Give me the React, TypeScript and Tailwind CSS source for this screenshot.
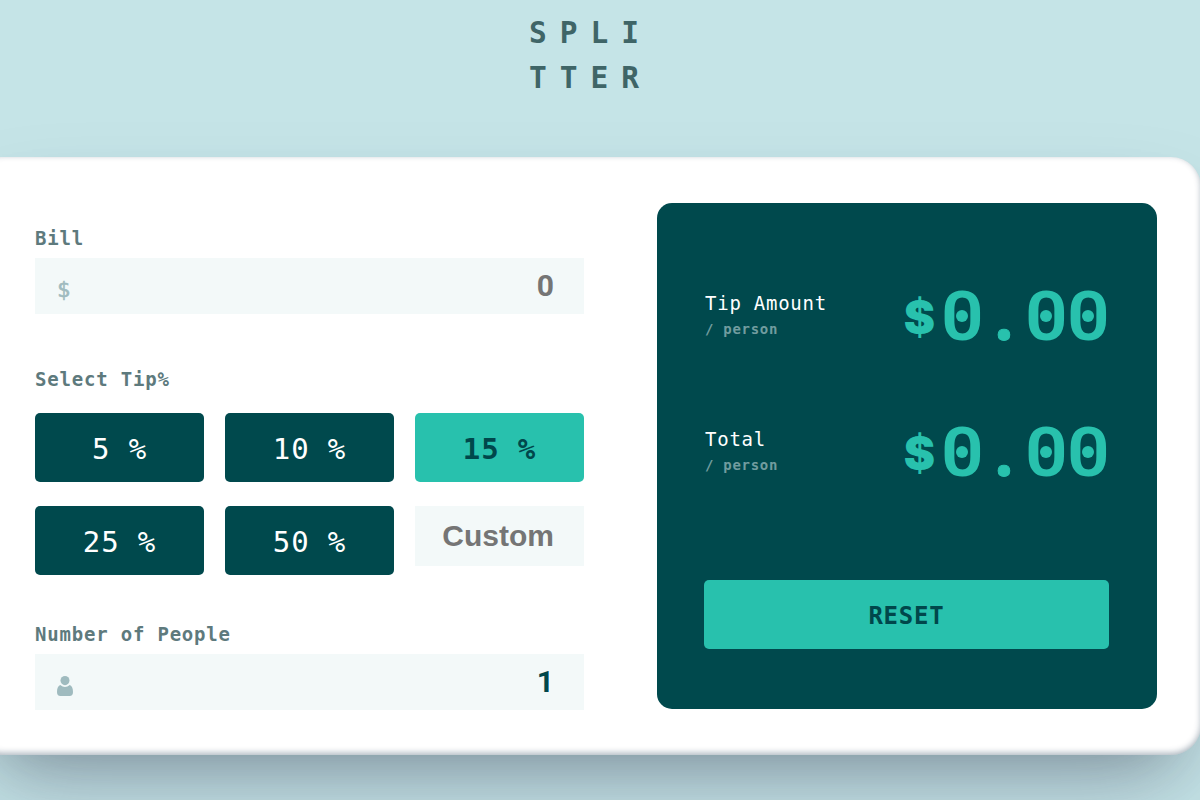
import React, { useState } from "react";

const mono = "font-['DejaVu_Sans_Mono',monospace]";
const sans = "font-['Liberation_Sans',sans-serif]";

function Label({ children }: { children: React.ReactNode }) {
  return (
    <div className="h-[30px] whitespace-pre text-[19px] leading-[30px] font-bold tracking-[0.8px] text-[#5e7a7d]">
      {children}
    </div>
  );
}

function PersonIcon() {
  return (
    <svg className="mt-2 h-5 w-4" viewBox="0 0 16 20" fill="#9fbbbf">
      <ellipse cx="8" cy="4.6" rx="4.5" ry="4.6" />
      <path d="M3.2 9 Q8 12.8 12.8 9 C15 9.9 16 12.2 16 16 Q16 20 12.6 20 H3.4 Q0 20 0 16 C0 12.2 1 9.9 3.2 9 Z" />
    </svg>
  );
}

function Field({
  icon,
  value,
  placeholder,
}: {
  icon: React.ReactNode;
  value: string;
  placeholder?: string;
}) {
  const [text, setText] = useState(value);
  return (
    <div className="flex h-14 w-[549px] items-center bg-[#f3f9f9] pr-[30px] pl-[22px]">
      {icon}
      <input
        className="h-full min-w-0 flex-1 bg-transparent pb-px text-right font-['Roboto',sans-serif] text-[30px] font-bold text-[#00474b] outline-none placeholder:text-[#757575]"
        value={text}
        placeholder={placeholder}
        onChange={(e) => setText(e.target.value)}
      />
    </div>
  );
}

function TipButton({
  value,
  active,
  onClick,
}: {
  value: number;
  active: boolean;
  onClick: () => void;
}) {
  const tone = active
    ? "bg-[#28c1ad] text-[#00474b] font-bold"
    : "bg-[#00494d] text-white";
  return (
    <button
      onClick={onClick}
      className={`h-[69px] w-[169px] rounded-[5px] pt-[5px] text-[29px] tracking-[0.9px] ${tone}`}
    >
      {value} %
    </button>
  );
}

function Zero() {
  return (
    <span className="relative flex w-[42px] justify-center pt-px">
      <span className="inline-block scale-x-110 font-semibold">0</span>
      <span className="absolute top-[41px] left-[15px] h-3 w-3 rounded-full bg-[#28c1ad]" />
    </span>
  );
}

function Result({ title }: { title: string }) {
  return (
    <div className="flex h-[136px] justify-between">
      <div className="pt-[19px] pl-px">
        <div className="text-[19px] leading-[30px] tracking-[0.75px] text-white">{title}</div>
        <div className="text-[14px] leading-[22px] font-bold tracking-[0.7px] text-[#719c9f]">
          / person
        </div>
      </div>
      <div className="flex h-[102px] pr-px font-['Roboto',sans-serif] text-[68px] leading-[94px] font-bold text-[#28c1ad]">
        <span className="w-[42px] pr-[1px] text-center font-['Inter',sans-serif] text-[47px] leading-[95px] font-black">
          $
        </span>
        <Zero />
        <span className="w-[42px] text-center font-['Open_Sans',sans-serif] leading-[90px] [-webkit-text-stroke:1px_#28c1ad]">
          .
        </span>
        <Zero />
        <Zero />
      </div>
    </div>
  );
}

export default function App() {
  const [tip, setTip] = useState(15);
  return (
    <div className={`${mono} h-[800px] w-full overflow-hidden bg-[#c5e4e7]`}>
      <div className="-ml-[28px] w-[1229px]">
        <h1 className="ml-[557px] h-[157px] w-[130px] pt-[11px] text-[29.5px] leading-[45px] font-bold tracking-[13px] text-[#3f6567]">
          SPLI
          <br />
          TTER
        </h1>
        <main className="flex h-[598px] justify-between rounded-[30px] bg-white pt-[46px] pr-[44px] pl-[63px] shadow-[0_50px_100px_-20px_rgba(50,50,93,0.25),0_30px_60px_-30px_rgba(0,0,0,0.3),inset_0_-2px_6px_0_rgba(10,37,64,0.35)]">
          <section className="pt-5">
            <Label>Bill</Label>
            <div className="mt-[5px]">
              <Field
                value=""
                placeholder="0"
                icon={
                  <span className="pt-2 text-[22px] leading-[30px] text-[#9fbbbf] [-webkit-text-stroke:0.6px_#9fbbbf]">
                    $
                  </span>
                }
              />
            </div>
            <div className="mt-[50px]">
              <Label>Select Tip%</Label>
            </div>
            <div className="mt-[19px] grid w-[549px] grid-cols-3 gap-x-[21px] gap-y-6">
              {[5, 10, 15, 25, 50].map((n) => (
                <TipButton key={n} value={n} active={tip === n} onClick={() => setTip(n)} />
              ))}
              <input
                placeholder="Custom"
                className={`${sans} h-[60px] w-[169px] bg-[#f3f9f9] pr-[30px] text-right text-[30px] font-bold text-[#00474b] outline-none placeholder:text-[#757575]`}
              />
            </div>
            <div className="mt-[44px]">
              <Label>Number of People</Label>
            </div>
            <div className="mt-[5px]">
              <Field value="1" icon={<PersonIcon />} />
            </div>
          </section>
          <section className="flex h-[506px] w-[500px] flex-col rounded-[15px] bg-[#00494d] px-[47px] pt-[66px]">
            <Result title="Tip Amount" />
            <Result title="Total" />
            <button className="mt-[39px] h-[69px] w-[405px] rounded-[5px] bg-[#28c1ad] pt-[2px] text-[24px] font-bold tracking-[0.8px] text-[#00474b]">
              RESET
            </button>
          </section>
        </main>
      </div>
    </div>
  );
}
